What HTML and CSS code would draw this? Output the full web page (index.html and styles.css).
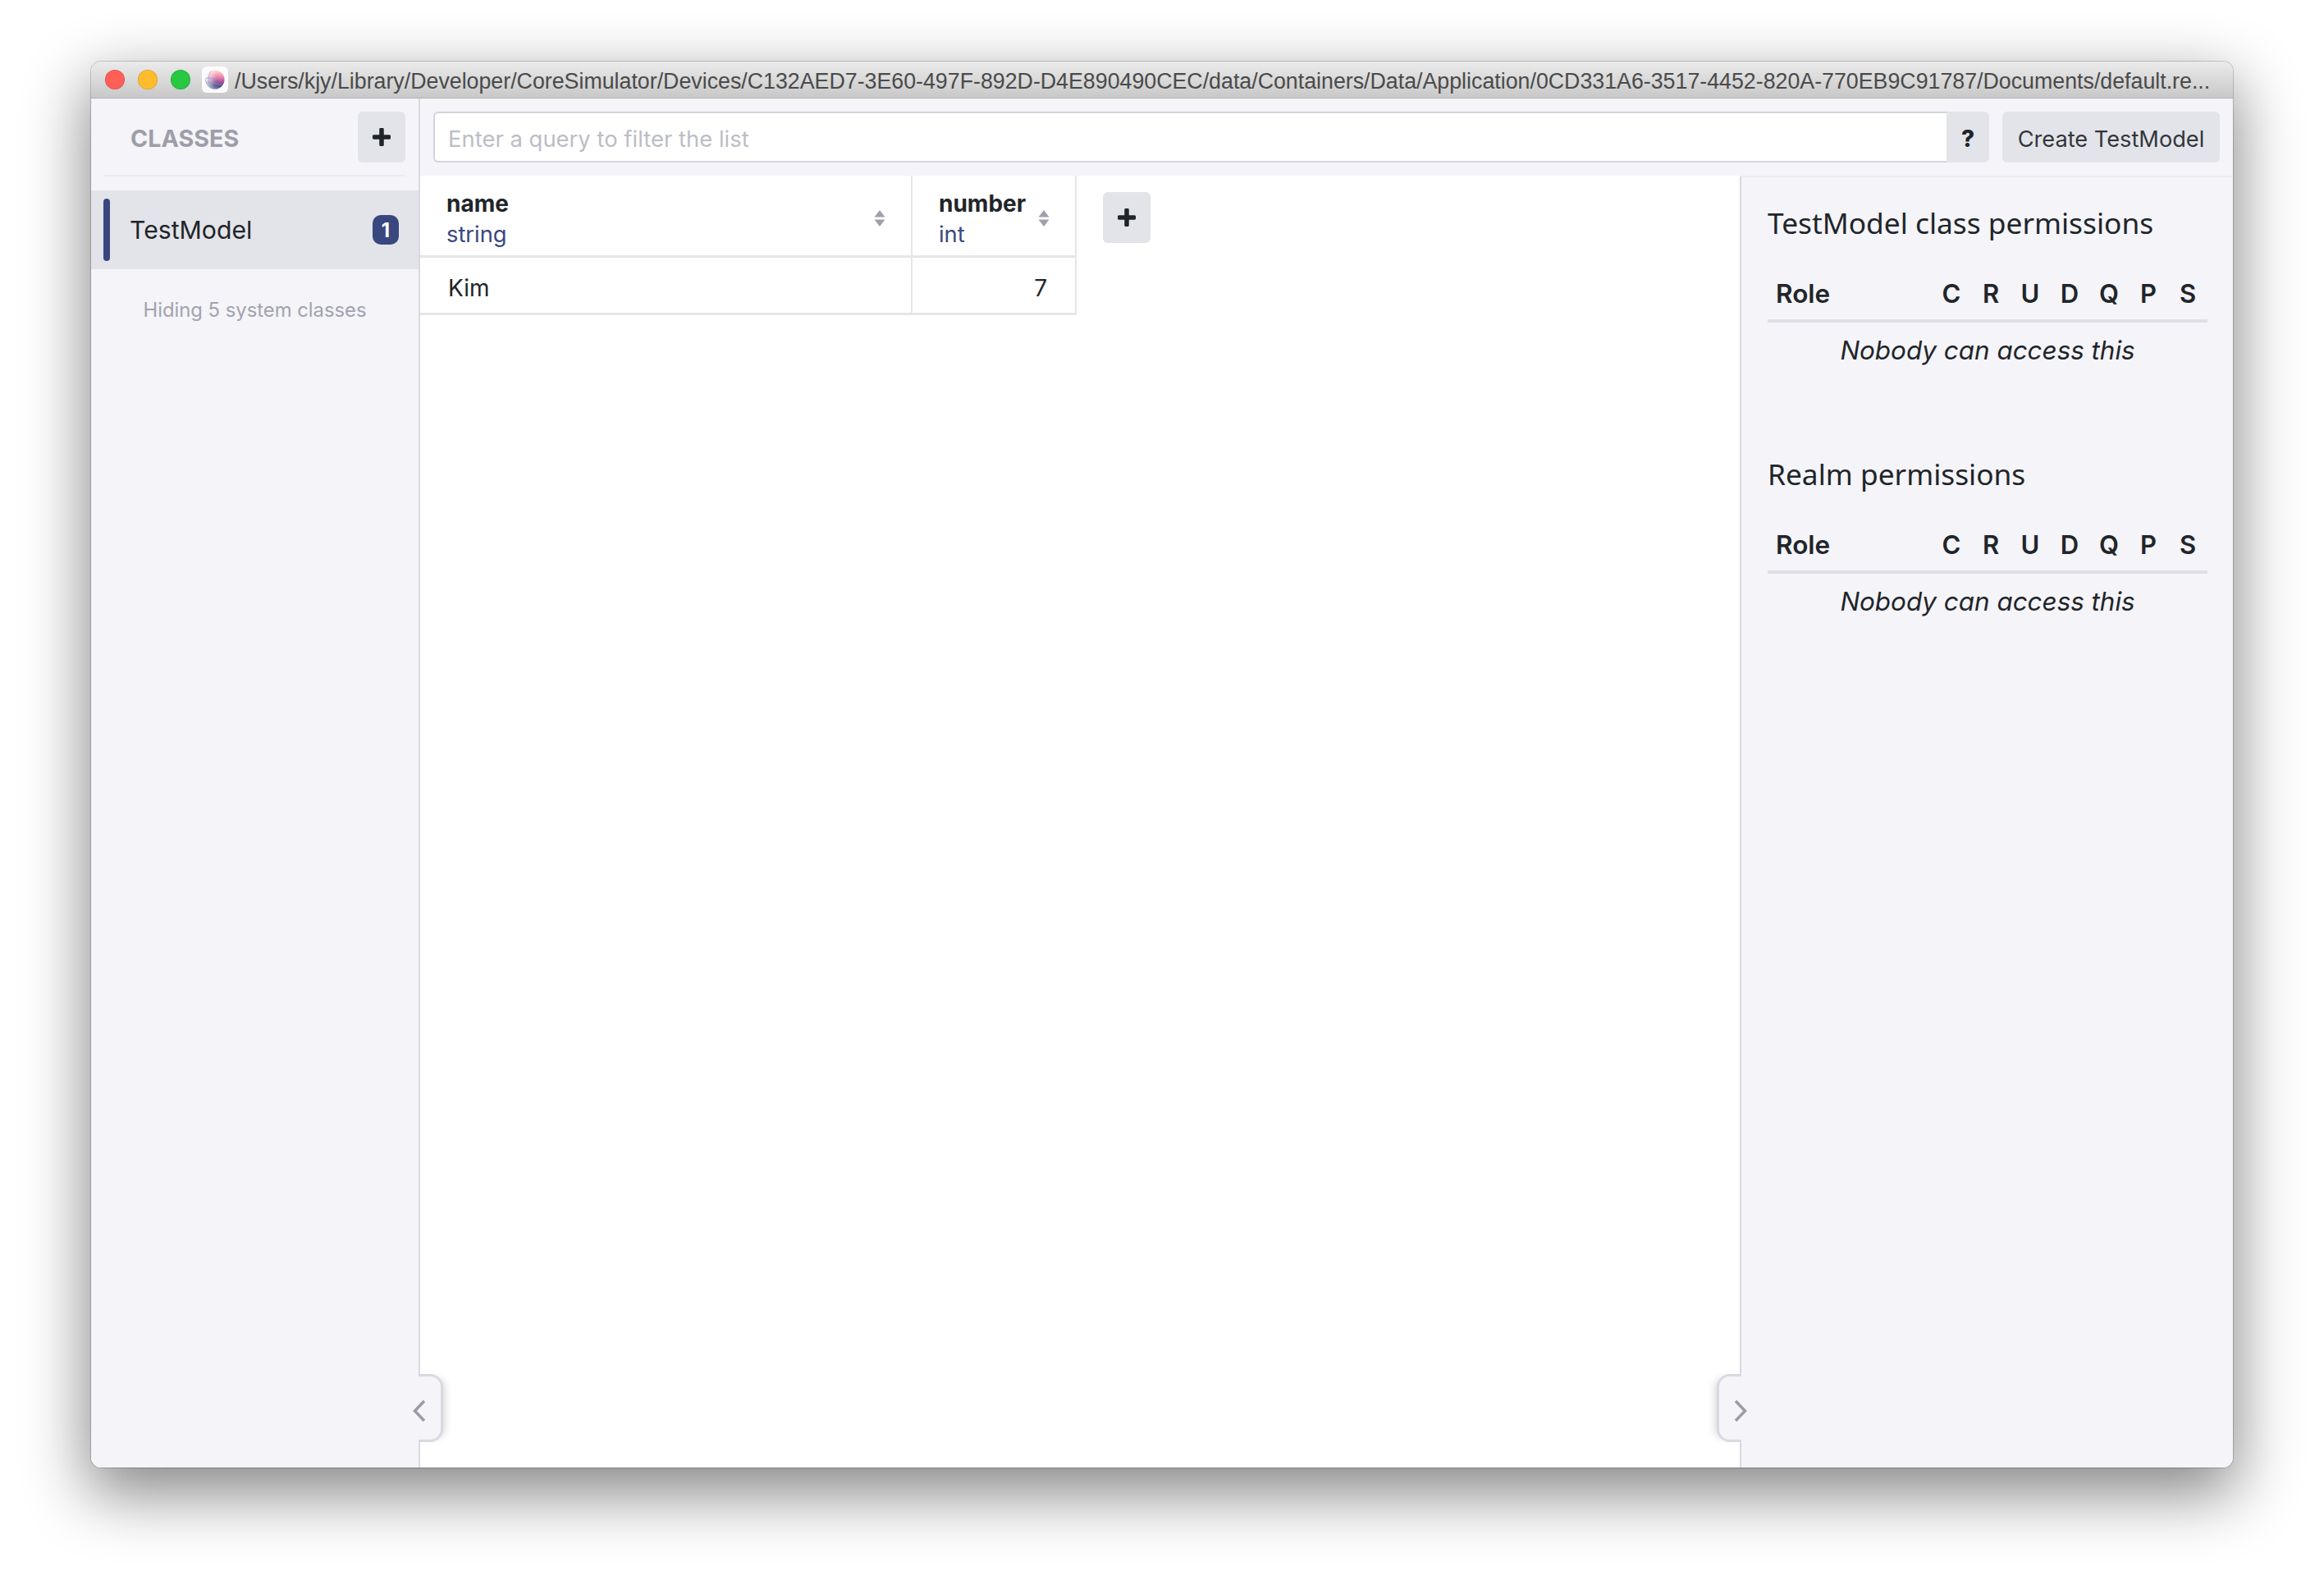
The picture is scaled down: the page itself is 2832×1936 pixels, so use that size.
FILE: index.html
```html
<!DOCTYPE html>
<html lang="en">
<head>
<meta charset="utf-8">
<title>Realm Studio</title>
<link rel="stylesheet" href="styles.css">
</head>
<body>
<div class="window">
  <header class="titlebar">
    <span class="light light-red"></span>
    <span class="light light-yellow"></span>
    <span class="light light-green"></span>
    <span class="app-icon">
      <svg width="26" height="26" viewBox="0 0 26 26">
        <defs>
          <linearGradient id="globe" x1="0.6" y1="0" x2="0.4" y2="1">
            <stop offset="0" stop-color="#fbd5c6"/>
            <stop offset="0.3" stop-color="#f4789c"/>
            <stop offset="0.55" stop-color="#a2469a"/>
            <stop offset="0.8" stop-color="#3b4680"/>
            <stop offset="1" stop-color="#6a74a6"/>
          </linearGradient>
          <linearGradient id="fade" x1="0" y1="0.4" x2="1" y2="0.6">
            <stop offset="0" stop-color="#fff" stop-opacity="1"/>
            <stop offset="0.55" stop-color="#fff" stop-opacity="0.15"/>
            <stop offset="1" stop-color="#fff" stop-opacity="0"/>
          </linearGradient>
        </defs>
        <circle cx="13" cy="13" r="11.5" fill="url(#globe)"/>
        <circle cx="13" cy="13" r="11.8" fill="url(#fade)"/>
        <path d="M1.500 13a11.500 11.500 0 0 0 16 10.500M1.500 12C7 8 12 16 24 12M2 17c6-3 10 3 19 2M8 3c-4 6-4 14 1 20" fill="none" stroke="#8f93bd" stroke-width="0.6"/>
      </svg>
    </span>
    <span class="path">/Users/kjy/Library/Developer/CoreSimulator/Devices/C132AED7-3E60-497F-892D-D4E890490CEC/data/Containers/Data/Application/0CD331A6-3517-4452-820A-770EB9C91787/Documents/default.re...</span>
  </header>
  <div class="main">
    <aside class="sidebar">
      <div class="side-head">
        <span class="side-title">CLASSES</span>
        <button class="btn btn-plus">
          <svg width="22" height="22" viewBox="0 0 22 22"><path d="M11 2v18M2 11h18" stroke="#212529" stroke-width="5.5" stroke-linecap="round"/></svg>
        </button>
      </div>
      <div class="class-row">
        <span class="class-bar"></span>
        <span class="class-name">TestModel</span>
        <span class="badge">1</span>
      </div>
      <p class="hidden-note">Hiding 5 system classes</p>
      <div class="tab tab-left">
        <svg class="chev" width="16" height="28" viewBox="0 0 16 28"><path d="M14 2L2.500 14L14 26" fill="none" stroke="#9c9ca8" stroke-width="3.500"/></svg>
      </div>
    </aside>
    <div class="content">
      <div class="toolbar">
        <div class="query">
          <input class="query-input" type="text" placeholder="Enter a query to filter the list">
          <button class="btn btn-help">?</button>
        </div>
        <button class="btn btn-create">Create TestModel</button>
      </div>
      <div class="body">
        <section class="grid-area">
          <table class="grid">
            <thead>
              <tr>
                <th class="col-name">
                  <div class="th-in">
                    <div><div class="th-name">name</div><div class="th-type">string</div></div>
                    <svg class="sort" width="14" height="20" viewBox="0 0 14 20"><path d="M7 0l6.500 8.500H.5zM7 20l6.500-8.500H.5z" fill="#a0a0ac"/></svg>
                  </div>
                </th>
                <th class="col-number">
                  <div class="th-in">
                    <div><div class="th-name">number</div><div class="th-type">int</div></div>
                    <svg class="sort" width="14" height="20" viewBox="0 0 14 20"><path d="M7 0l6.500 8.500H.5zM7 20l6.500-8.500H.5z" fill="#a0a0ac"/></svg>
                  </div>
                </th>
              </tr>
            </thead>
            <tbody>
              <tr><td>Kim</td><td class="num">7</td></tr>
            </tbody>
          </table>
          <button class="btn btn-plus btn-addcol">
            <svg width="22" height="22" viewBox="0 0 22 22"><path d="M11 2v18M2 11h18" stroke="#212529" stroke-width="5.5" stroke-linecap="round"/></svg>
          </button>
        </section>
        <aside class="perms">
          <div class="tab tab-right">
            <svg class="chev" width="16" height="28" viewBox="0 0 16 28"><path d="M2 2L13.500 14L2 26" fill="none" stroke="#9c9ca8" stroke-width="3.500"/></svg>
          </div>
          <section class="perm-block">
            <h2 class="perm-title">TestModel class permissions</h2>
            <div class="perm-head">
              <span class="perm-role">Role</span>
              <span class="perm-key">C</span><span class="perm-key">R</span><span class="perm-key">U</span><span class="perm-key">D</span><span class="perm-key">Q</span><span class="perm-key">P</span><span class="perm-key">S</span>
            </div>
            <p class="perm-empty">Nobody can access this</p>
          </section>
          <section class="perm-block">
            <h2 class="perm-title">Realm permissions</h2>
            <div class="perm-head">
              <span class="perm-role">Role</span>
              <span class="perm-key">C</span><span class="perm-key">R</span><span class="perm-key">U</span><span class="perm-key">D</span><span class="perm-key">Q</span><span class="perm-key">P</span><span class="perm-key">S</span>
            </div>
            <p class="perm-empty">Nobody can access this</p>
          </section>
        </aside>
      </div>
    </div>
  </div>
</div>
</body>
</html>
```

FILE: styles.css
```css
* { box-sizing: border-box; }
html, body { margin: 0; background: #fff; overflow: hidden; }
body {
  width: 2832px;
  height: 1936px;
  padding: 75px 111px 148px;
  font-family: Inter, "Liberation Sans", sans-serif;
  color: #212529;
}
.window {
  height: 100%;
  display: flex;
  flex-direction: column;
  border-radius: 12px;
  background: #f4f4f9;
  box-shadow: 0 0 0 1px rgba(0, 0, 0, 0.18), 0 28px 78px 4px rgba(0, 0, 0, 0.48);
  overflow: hidden;
}
.titlebar {
  flex: none;
  height: 45px;
  display: flex;
  align-items: center;
  padding-left: 17px;
  background: linear-gradient(#ebebeb, #c8c8c8);
  border-bottom: 1px solid #b2b2b2;
}
.light {
  flex: none;
  width: 24px;
  height: 24px;
  border-radius: 50%;
  margin-right: 16px;
  border: 1px solid rgba(0, 0, 0, 0.12);
}
.light-red { background: #ff5f57; }
.light-yellow { background: #ffbd2e; }
.light-green { background: #28c940; margin-right: 14px; }
.app-icon {
  flex: none;
  width: 32px;
  height: 32px;
  border-radius: 6px;
  background: #fbfbfd;
  display: flex;
  align-items: center;
  justify-content: center;
}
.path {
  margin-left: 8px;
  padding-top: 4px;
  font-family: "Liberation Sans", sans-serif;
  font-size: 26.78px;
  color: #4a4a4a;
  white-space: nowrap;
}
.main { flex: 1; display: flex; min-height: 0; }
.sidebar {
  position: relative;
  z-index: 2;
  flex: none;
  width: 401px;
  border-right: 2px solid #d9d9e2;
  background: #f4f4f9;
}
.side-head {
  margin: 16px 16px 0 15px;
  height: 79px;
  padding: 0 0 0 33px;
  display: flex;
  align-items: flex-start;
  justify-content: space-between;
  border-bottom: 2px solid #ececf2;
}
.side-title { font-size: 28.7px; line-height: 66px; font-weight: 700; color: #9e9ea9; }
.btn {
  border: 0;
  padding: 0;
  font-family: inherit;
  color: #212529;
  background: #e3e4e9;
  border-radius: 6px;
  display: flex;
  align-items: center;
  justify-content: center;
}
.btn-plus { width: 58px; height: 62px; flex: none; }
.class-row {
  margin-top: 17px;
  height: 96px;
  display: flex;
  align-items: center;
  background: #e3e4e9;
  padding: 0 24px 0 15px;
}
.class-bar {
  width: 8px;
  height: 76px;
  border-radius: 4px;
  background: #39477f;
}
.class-name { margin-left: 24px; flex: 1; font-size: 30.2px; }
.badge {
  width: 32px;
  height: 36px;
  border-radius: 10px;
  background: #39477f;
  color: #fff;
  font-size: 24px;
  font-weight: 700;
  display: flex;
  align-items: center;
  justify-content: center;
}
.hidden-note {
  margin: 35px 0 0;
  text-align: center;
  font-size: 23.8px;
  line-height: 30px;
  color: #a3a3ae;
}
.tab {
  position: absolute;
  bottom: 31px;
  width: 30px;
  height: 83px;
  background: #f4f4f9;
  border: 3px solid #d9d9e2;
}
.tab-left {
  right: -30px;
  border-left: 0;
  border-radius: 0 16px 16px 0;
  box-shadow: 7px 0 10px -5px rgba(0, 0, 0, 0.16);
}
.tab-right {
  left: -30px;
  border-right: 0;
  border-radius: 16px 0 0 16px;
  box-shadow: -7px 0 10px -5px rgba(0, 0, 0, 0.16);
}
.chev { position: absolute; top: 28px; }
.tab-left .chev { left: -7px; }
.tab-right .chev { right: -7px; }
.content { flex: 1; min-width: 0; display: flex; flex-direction: column; }
.toolbar {
  flex: none;
  height: 94px;
  padding: 16px 16px 0 16px;
  display: flex;
  gap: 16px;
  align-items: flex-start;
}
.query { flex: 1; display: flex; height: 62px; }
.query-input {
  flex: 1;
  min-width: 0;
  height: 62px;
  padding: 4px 16px 0;
  border: 2px solid #d2d5dd;
  border-right: 0;
  border-radius: 6px 0 0 6px;
  background: #fff;
  font-family: inherit;
  font-size: 27.45px;
  color: #212529;
  outline: none;
}
.query-input::placeholder { color: #bcbdc6; opacity: 1; }
.btn-help {
  width: 52px;
  height: 62px;
  padding-top: 4px;
  border-radius: 0 6px 6px 0;
  font-size: 28px;
  font-weight: 800;
}
.btn-create { width: 265px; height: 62px; padding-top: 4px; font-size: 27.2px; color: #33363b; }
.body { flex: 1; display: flex; min-height: 0; }
.grid-area {
  position: relative;
  flex: 1;
  background: #fff;
  display: flex;
  align-items: flex-start;
}
.grid { border-collapse: separate; border-spacing: 0; table-layout: fixed; width: 800px; }
.col-name { width: 600px; }
.col-number { width: 200px; }
.grid th, .grid td {
  padding: 0;
  border-right: 2px solid #e6e6ea;
  border-bottom: 3px solid #e6e6ea;
  text-align: left;
}
.grid th { height: 100px; font-weight: 400; }
.th-in { display: flex; align-items: center; justify-content: space-between; padding: 8px 31px 0 32px; }
.th-name { font-size: 28px; line-height: 38px; font-weight: 700; color: #212529; }
.th-type { font-size: 27.3px; line-height: 38px; color: #39477f; }
.col-number .th-in { padding: 8px 31px 0 32px; }
.sort { flex: none; margin-top: -2px; }
.grid td { height: 70px; font-size: 28px; padding: 6px 34px 0; }
.grid td.num { text-align: right; }
.btn-addcol { position: absolute; left: 832px; top: 20px; }
.perms {
  position: relative;
  flex: none;
  width: 601px;
  padding: 0 31px 0 32px;
  border-left: 2px solid #d9d9e2;
  border-top: 2px solid #ececf2;
  background: #f4f4f9;
}
.perm-block { height: 306px; padding-top: 32px; }
.perm-title {
  margin: 0;
  font-family: "Noto Sans", sans-serif;
  font-size: 35.3px;
  line-height: 46px;
  font-weight: 400;
  color: #212529;
}
.perm-head {
  margin-top: 46px;
  height: 53px;
  padding-bottom: 14px;
  display: flex;
  align-items: center;
  border-bottom: 4px solid #dee0e5;
  padding-left: 10px;
}
.perm-role { flex: 1; font-size: 31.5px; font-weight: 600; }
.perm-key { width: 48px; text-align: center; font-size: 31px; font-weight: 600; }
.perm-empty {
  margin: 14px 0 0;
  text-align: center;
  font-size: 31.4px;
  line-height: 40px;
  font-style: italic;
}
```
